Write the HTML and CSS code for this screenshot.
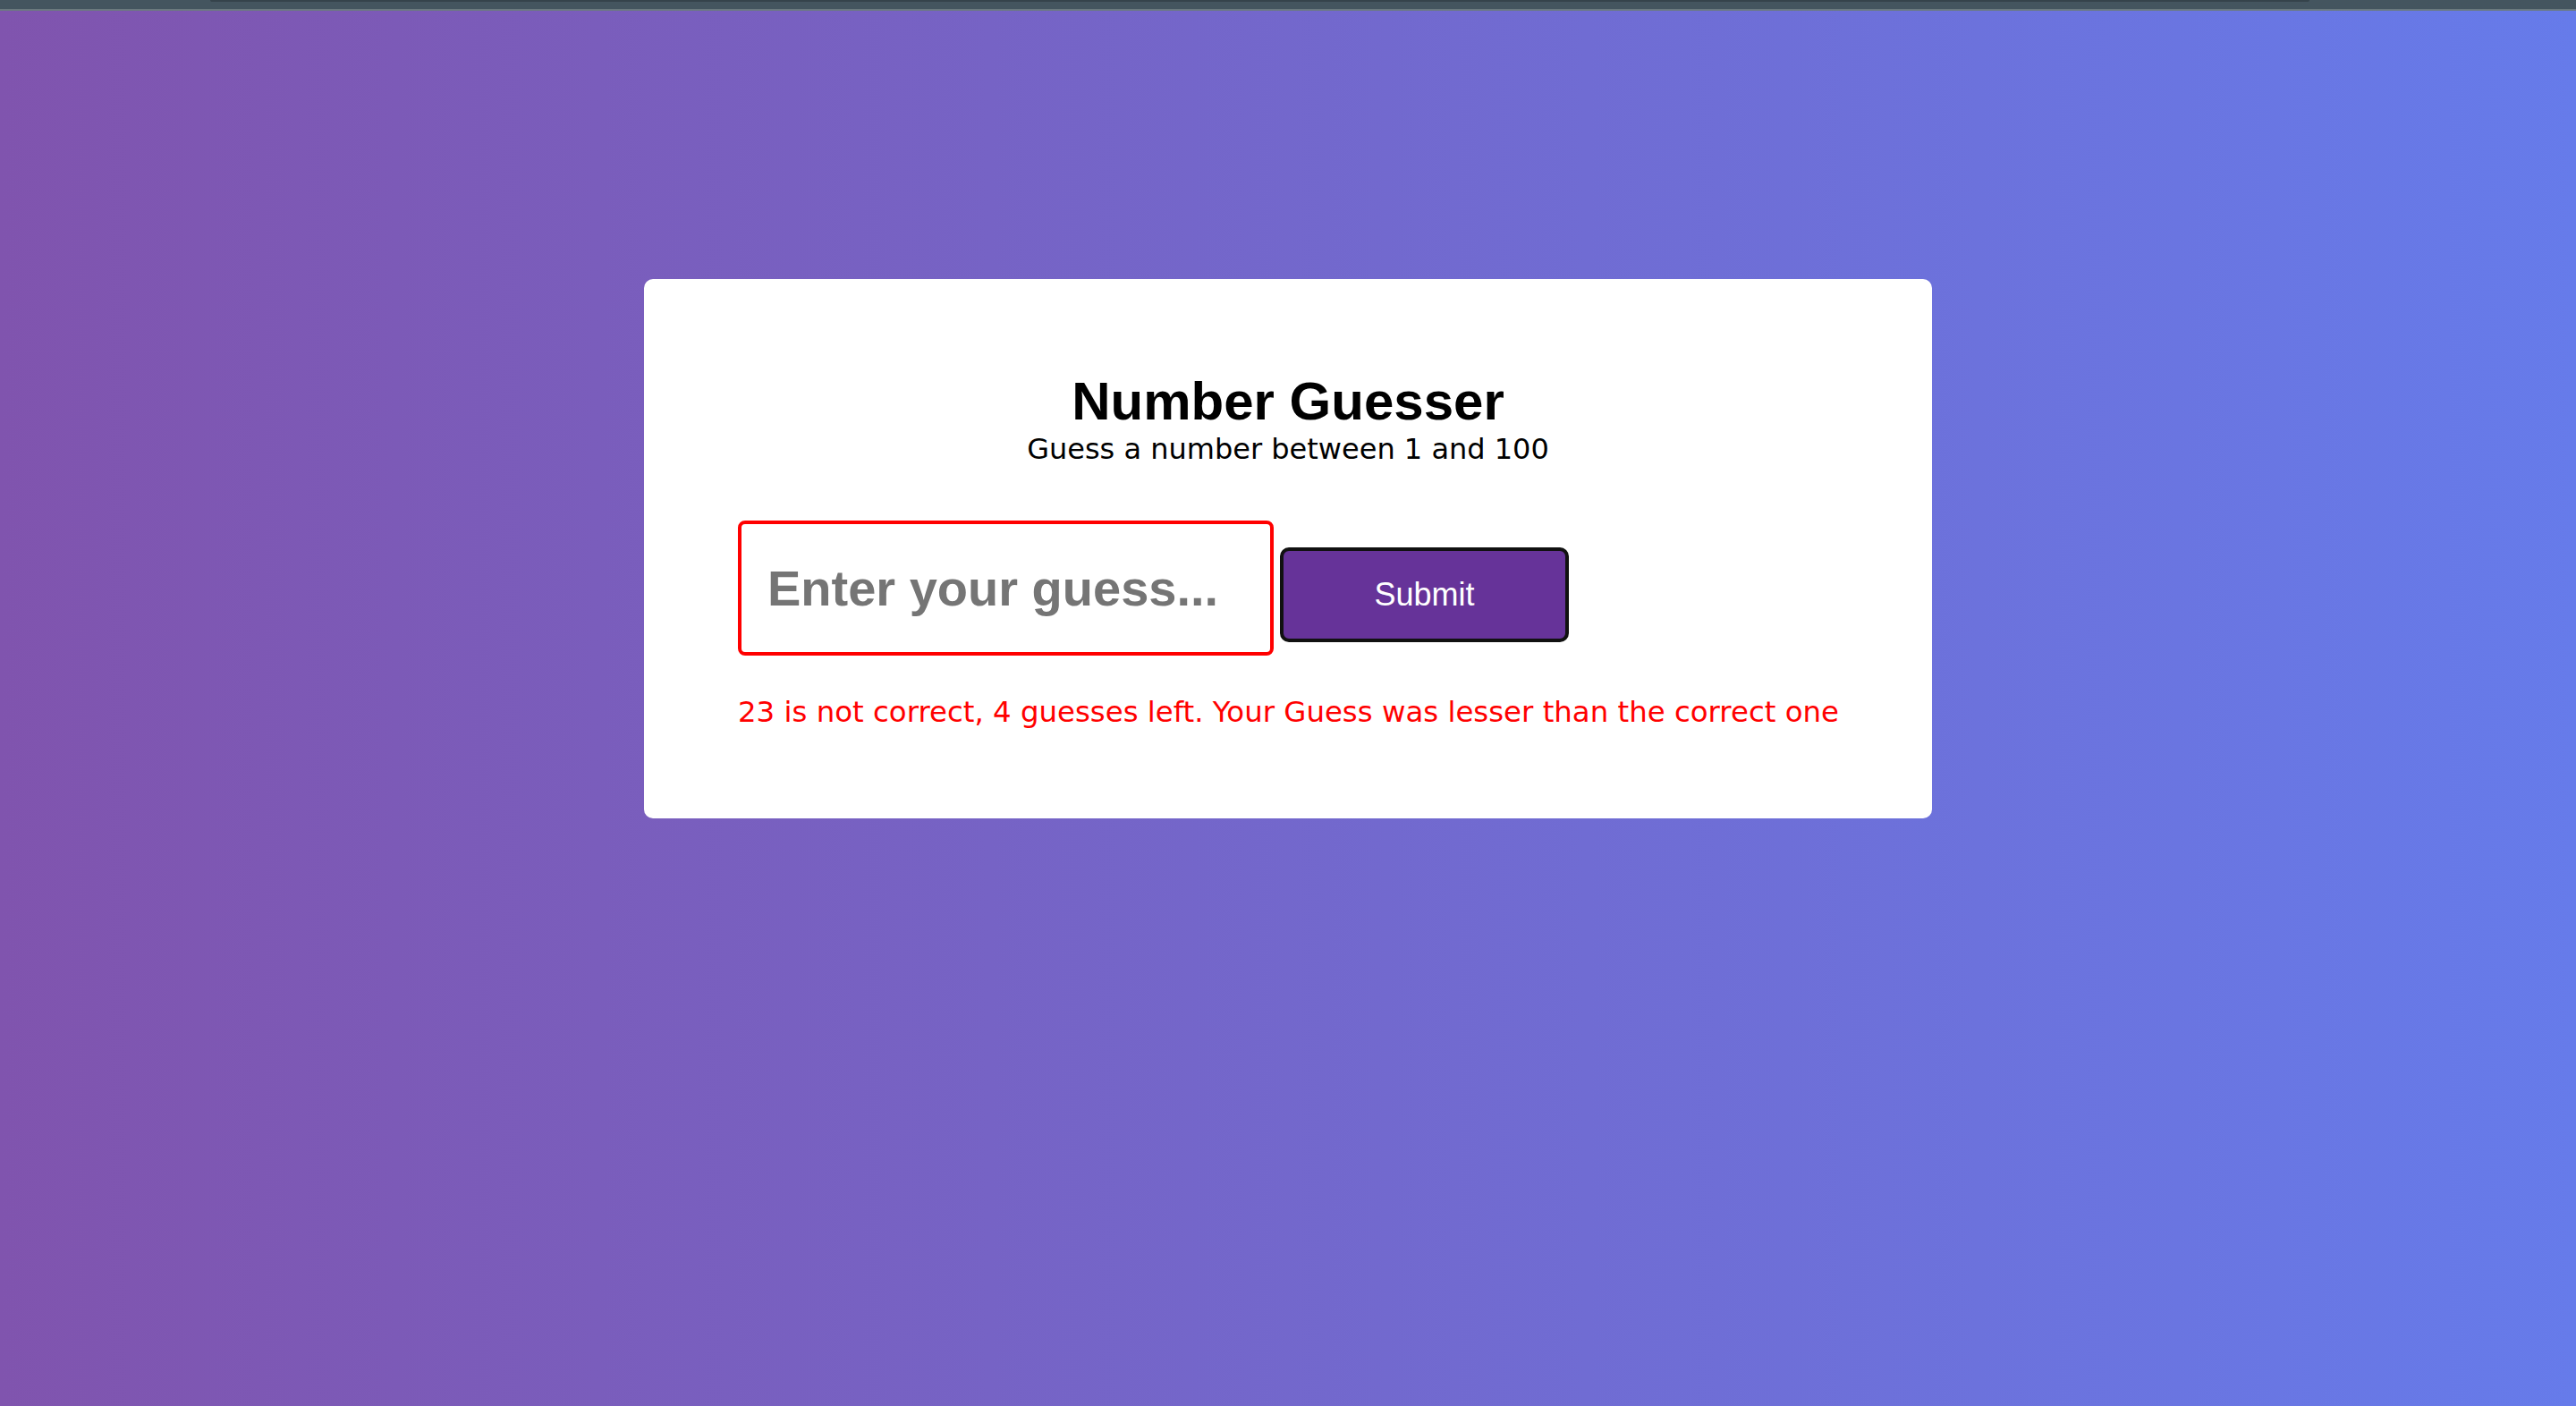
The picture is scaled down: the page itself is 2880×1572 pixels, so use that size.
FILE: index.html
```html
<!DOCTYPE html>
<html lang="en">
<head>
<meta charset="utf-8">
<title>Number Guesser</title>
<link rel="stylesheet" href="styles.css">
</head>
<body>
<div class="topbar"><div class="topbar-shade"></div></div>
<main class="page">
  <section class="card">
    <h1 class="title">Number Guesser</h1>
    <p class="subtitle">Guess a number between 1 and 100</p>
    <form class="guess-form">
      <input class="guess-input" type="number" placeholder="Enter your guess...">
      <button class="submit-btn" type="button">Submit</button>
    </form>
    <p class="message">23 is not correct, 4 guesses left. Your Guess was lesser than the correct one</p>
  </section>
</main>
</body>
</html>
```
FILE: styles.css
```css
html, body {
  margin: 0;
  padding: 0;
  height: 100%;
}
body {
  display: flex;
  flex-direction: column;
  font-family: "DejaVu Sans", sans-serif;
}
.topbar {
  height: 10px;
  background: #44555f;
  border-bottom: 2px solid #6b7a7e;
  display: flex;
  padding-left: 235px;
  padding-right: 298px;
}
.topbar-shade {
  flex: 1;
  height: 2px;
  background: #35434b;
  border-radius: 0 0 4px 4px;
}
.page {
  flex: 1;
  background: linear-gradient(to right, #8054ae, #667bea);
  display: flex;
  justify-content: center;
  align-items: flex-start;
}
.card {
  margin-top: 300px;
  width: 1440px;
  box-sizing: border-box;
  background: #fff;
  border-radius: 10px;
  padding: 102px 105px 100px;
}
.title {
  margin: 0;
  text-align: center;
  font-family: "Liberation Sans", Arial, sans-serif;
  font-weight: bold;
  font-size: 60px;
  line-height: normal;
  color: #000;
}
.subtitle {
  margin: 0;
  text-align: center;
  font-size: 32px;
  color: #000;
}
.guess-form {
  margin-top: 61px;
  display: flex;
  align-items: baseline;
  gap: 7px;
}
.guess-input {
  width: 599px;
  height: 151px;
  box-sizing: border-box;
  border: 4px solid #ff0000;
  border-radius: 8px;
  padding: 0 29px;
  font-family: "Liberation Sans", Arial, sans-serif;
  font-weight: bold;
  font-size: 56px;
  color: #000;
  background: #fff;
  outline: none;
  -moz-appearance: textfield;
}
.guess-input::-webkit-outer-spin-button,
.guess-input::-webkit-inner-spin-button {
  -webkit-appearance: none;
  margin: 0;
}
.guess-input::placeholder {
  color: #757575;
}
.submit-btn {
  width: 323px;
  height: 106px;
  box-sizing: border-box;
  border: 4px solid #111;
  border-radius: 10px;
  background: #663399;
  color: #fff;
  font-family: "Liberation Sans", Arial, sans-serif;
  font-size: 36px;
  cursor: pointer;
}
.message {
  margin: 44px 0 0;
  font-size: 32.4px;
  color: #ff0000;
  white-space: nowrap;
}
```
